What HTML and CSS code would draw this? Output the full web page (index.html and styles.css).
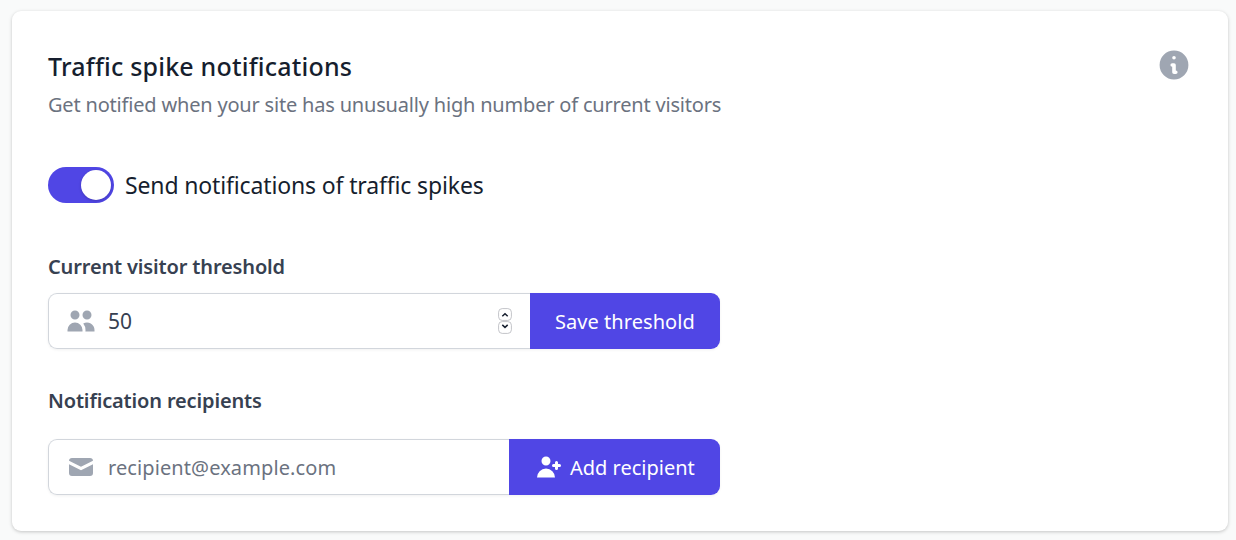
FILE: index.html
```html
<!DOCTYPE html>
<html lang="en">
<head>
<meta charset="utf-8">
<title>Traffic spike notifications</title>
<link rel="stylesheet" href="styles.css">
</head>
<body>
<main class="card">
  <header class="header">
    <div>
      <h2 class="title"><span>Traffic spike notifications</span></h2>
      <p class="subtitle"><span>Get notified when your site has unusually high number of current visitors</span></p>
    </div>
    <svg class="info" viewBox="0 0 20 20" fill="currentColor"><path fill-rule="evenodd" d="M18 10a8 8 0 11-16 0 8 8 0 0116 0zm-7-4a1 1 0 11-2 0 1 1 0 012 0zM9 9a1 1 0 000 2v3a1 1 0 001 1h1a1 1 0 100-2v-3a1 1 0 00-1-1H9z" clip-rule="evenodd"/></svg>
  </header>
  <div class="toggle-row">
    <div class="toggle"><div class="knob"></div></div>
    <span class="toggle-label">Send notifications of traffic spikes</span>
  </div>
  <section class="form">
    <div class="label"><span class="label-threshold">Current visitor threshold</span></div>
    <div class="group">
      <div class="field">
        <svg class="icon" viewBox="0 0 20 20" fill="currentColor"><path d="M9 6a3 3 0 11-6 0 3 3 0 016 0zM17 6a3 3 0 11-6 0 3 3 0 016 0zM12.93 17c.046-.327.07-.66.07-1a6.97 6.97 0 00-1.5-4.33A5 5 0 0119 16v1h-6.07zM6 11a5 5 0 015 5v1H1v-1a5 5 0 015-5z"/></svg>
        <span class="value">50</span>
        <div class="spinner">
          <svg class="step" viewBox="0 0 14 13"><rect x=".6" y=".6" width="12.8" height="11.8" rx="3.6"/><path d="M4.3 8.3L7 5.8l2.7 2.5"/></svg>
          <svg class="step" viewBox="0 0 14 13"><rect x=".6" y=".6" width="12.8" height="11.8" rx="3.6"/><path d="M4.3 3.9L7 6.4l2.7-2.5"/></svg>
        </div>
      </div>
      <div class="button save"><span class="save-text">Save threshold</span></div>
    </div>
  </section>
  <section class="form recipients">
    <div class="label"><span class="label-recipients">Notification recipients</span></div>
    <div class="group">
      <div class="field">
        <svg class="icon" viewBox="0 0 20 20" fill="currentColor"><path d="M2.003 5.884L10 9.882l7.997-3.998A2 2 0 0016 4H4a2 2 0 00-1.997 1.884z"/><path d="M18 8.118l-8 4-8-4V14a2 2 0 002 2h12a2 2 0 002-2V8.118z"/></svg>
        <span class="placeholder">recipient@example.com</span>
      </div>
      <div class="button add">
        <svg class="add-icon" viewBox="0 0 20 20" fill="currentColor"><path d="M8 9a3 3 0 100-6 3 3 0 000 6zM8 11a6 6 0 016 6H2a6 6 0 016-6zM16 7a1 1 0 10-2 0v1h-1a1 1 0 100 2h1v1a1 1 0 102 0v-1h1a1 1 0 100-2h-1V7z"/></svg>
        <span class="add-text">Add recipient</span>
      </div>
    </div>
  </section>
</main>
</body>
</html>
```
FILE: styles.css
```css
* { box-sizing: border-box; }
body {
  margin: 0;
  height: 540px;
  padding: 11px 8px 9px 12px;
  overflow: hidden;
  background: #f9fafa;
  font-family: "Noto Sans", sans-serif;
  font-size: 20px;
  color: #161e2e;
}
.card {
  height: 520px;
  padding: 36px;
  background: #fff;
  border-radius: 9px;
  box-shadow: 0 1px 4px rgba(0, 0, 0, .12), 0 1px 3px rgba(0, 0, 0, .1);
}
.header { display: flex; justify-content: space-between; height: 75px; }
.title { margin: 0; font-size: 25px; line-height: 38px; font-weight: 500; letter-spacing: .2px; white-space: nowrap; }
.subtitle { margin: 5px 0 0; font-size: 20px; line-height: 30px; letter-spacing: -.19px; color: #6b7280; white-space: nowrap; }
.info { width: 36px; height: 36px; color: #9fa6b2; }
.toggle-row { display: flex; align-items: center; height: 36px; margin-top: 45px; }
.toggle { width: 66px; height: 36px; padding: 3px; border-radius: 18px; background: #5046e5; }
.knob { width: 30px; height: 30px; margin-left: 30px; border-radius: 50%; background: #fff; box-shadow: 0 1px 3px rgba(0, 0, 0, .2); }
.toggle-label { margin-left: 11px; font-size: 23px; line-height: 36px; letter-spacing: -.14px; white-space: nowrap; }
.form { width: 672px; margin-top: 49px; }
.label { height: 41px; line-height: 30px; font-weight: 600; letter-spacing: -.15px; color: #374151; }
.group { display: flex; height: 56px; border-radius: 9px; box-shadow: 0 1px 3px rgba(0, 0, 0, .06); }
.field { display: flex; flex: 1; align-items: center; padding-left: 17px; border: 1px solid #d2d6dc; border-right: 0; border-radius: 9px 0 0 9px; }
.icon { width: 30px; height: 30px; color: #9fa6b2; }
.value { margin-left: 12px; font-size: 21px; color: #374151; }
.placeholder { margin-left: 12px; letter-spacing: .1px; color: #6b7280; }
.spinner { display: flex; flex-direction: column; margin-left: auto; margin-right: 18px; }
.step { display: block; width: 14px; height: 13px; fill: #fff; stroke: #c3c4c9; stroke-width: 1; }
.step path { fill: none; stroke: #161e2e; stroke-width: 1.5; }
.button { display: flex; align-items: center; color: #fff; background: #5046e5; border-radius: 0 9px 9px 0; white-space: nowrap; }
.save { width: 190px; padding-left: 25px; letter-spacing: .05px; }
.add { width: 211px; padding-left: 25px; }
.add-icon { width: 30px; height: 30px; margin-right: 6px; }
.recipients { margin-top: 37px; }
.recipients .label { height: 53px; }
```
